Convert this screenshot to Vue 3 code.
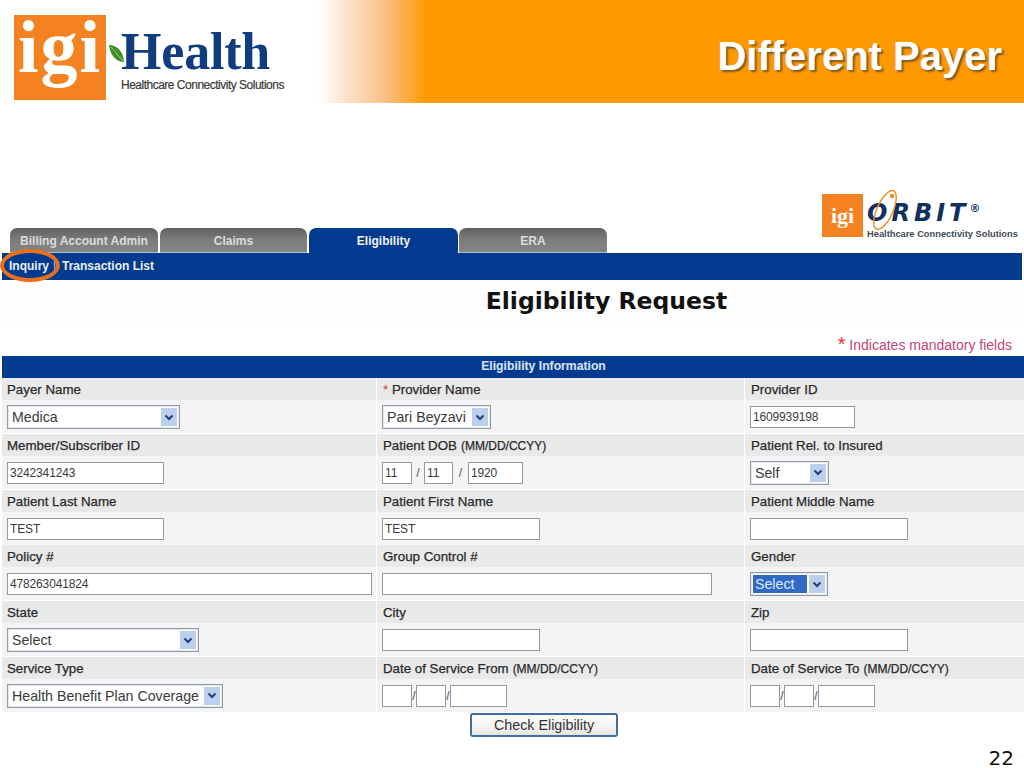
<script setup>
const rows = [
  [
    { label: 'Payer Name', type: 'select', value: 'Medica', width: 173 },
    { label: 'Provider Name', req: true, type: 'select', value: 'Pari Beyzavi', width: 109 },
    { label: 'Provider ID', type: 'input', parts: [{ value: '1609939198', width: 105 }] },
  ],
  [
    { label: 'Member/Subscriber ID', type: 'input', parts: [{ value: '3242341243', width: 157 }] },
    { label: 'Patient DOB', hint: '(MM/DD/CCYY)', type: 'input', parts: [{ value: '11', width: 30 }, { value: '11', width: 29, sep: 12 }, { value: '1920', width: 55, sep: 15 }] },
    { label: 'Patient Rel. to Insured', type: 'select', value: 'Self', width: 79 },
  ],
  [
    { label: 'Patient Last Name', type: 'input', parts: [{ value: 'TEST', width: 157 }] },
    { label: 'Patient First Name', type: 'input', parts: [{ value: 'TEST', width: 158 }] },
    { label: 'Patient Middle Name', type: 'input', parts: [{ value: '', width: 158 }] },
  ],
  [
    { label: 'Policy #', type: 'input', parts: [{ value: '478263041824', width: 365 }] },
    { label: 'Group Control #', type: 'input', parts: [{ value: '', width: 330 }] },
    { label: 'Gender', type: 'select', value: 'Select', width: 78, selected: true },
  ],
  [
    { label: 'State', type: 'select', value: 'Select', width: 192 },
    { label: 'City', type: 'input', parts: [{ value: '', width: 158 }] },
    { label: 'Zip', type: 'input', parts: [{ value: '', width: 158 }] },
  ],
  [
    { label: 'Service Type', type: 'select', value: 'Health Benefit Plan Coverage', width: 216 },
    { label: 'Date of Service From', hint: '(MM/DD/CCYY)', type: 'input', parts: [{ value: '', width: 30 }, { value: '', width: 30, sep: 4 }, { value: '', width: 57, sep: 4 }] },
    { label: 'Date of Service To', hint: '(MM/DD/CCYY)', type: 'input', parts: [{ value: '', width: 30 }, { value: '', width: 30, sep: 4 }, { value: '', width: 57, sep: 4 }] },
  ],
]
const cells = rows.flat()
const tabs = [
  { name: 'Billing Account Admin', width: 148 },
  { name: 'Claims', width: 147 },
  { name: 'Eligibility', width: 149, active: true },
  { name: 'ERA', width: 148 },
]
</script>

<template>
  <div class="page">
    <header class="banner">
      <div class="igi-logo">
        <div class="igi-square">igi</div>
        <svg class="leaf" width="17" height="20" viewBox="0 0 17 20">
          <path d="M1 1 C8 1 15 6 16 18 C8 18 2 11 1 1 Z" fill="#3f8f2c" />
          <path d="M3 3 C7 8 11 12 15 17" stroke="#bfe0a8" stroke-width=".7" fill="none" />
        </svg>
        <div class="igi-words">
          <div class="health">Health</div>
          <div class="strap">Healthcare Connectivity Solutions</div>
        </div>
      </div>
      <div class="slide-title">Different Payer</div>
    </header>

    <div class="tab-row">
      <div class="tabs">
        <div v-for="t in tabs" :key="t.name" class="tab" :class="{ active: t.active }" :style="{ width: t.width + 'px' }">{{ t.name }}</div>
      </div>
      <div class="orbit-logo">
        <div class="orbit-square">igi</div>
        <div class="orbit-words">
          <div class="orbit-name">
            <span>ORBIT</span><span class="reg">®</span>
            <svg class="orbit-ring" width="40" height="46" viewBox="0 0 40 46">
              <ellipse cx="20" cy="23" rx="8" ry="21" transform="rotate(24 20 23)" fill="none" stroke="#ee8a1e" stroke-width="1.4" />
              <circle cx="27" cy="9" r="2.2" fill="#ee8a1e" />
            </svg>
          </div>
          <div class="orbit-strap">Healthcare Connectivity Solutions</div>
        </div>
      </div>
    </div>

    <nav class="subnav">
      <span class="sub-first">Inquiry</span>
      <span class="sub-sep">|</span>
      <span class="sub-second">Transaction List</span>
      <span class="ring"></span>
    </nav>

    <h1 class="request-title">Eligibility Request</h1>
    <div class="mandatory"><span class="star">*</span> Indicates mandatory fields</div>

    <section class="form">
      <div class="form-head">Eligibility Information</div>
      <div class="form-grid">
        <div v-for="c in cells" :key="c.label" class="cell">
          <div class="cell-label"><span v-if="c.req" class="req">* </span>{{ c.label }}<span v-if="c.hint" class="hint">{{ c.hint }}</span></div>
          <div class="cell-field">
            <div v-if="c.type === 'select'" class="select" :style="{ width: c.width + 'px' }">
              <span class="select-text" :class="{ picked: c.selected }">{{ c.value }}</span>
              <span class="select-btn">
                <svg width="10" height="7" viewBox="0 0 10 7"><path d="M1.5 1.5 L5 5 L8.5 1.5" fill="none" stroke="#1f3f78" stroke-width="2" /></svg>
              </span>
            </div>
            <div v-else class="inputs">
              <template v-for="(p, i) in c.parts" :key="i">
                <span v-if="i > 0" class="slash" :style="{ width: p.sep + 'px' }">/</span>
                <input class="text-input" readonly :value="p.value" :style="{ width: p.width + 'px' }" />
              </template>
            </div>
          </div>
        </div>
      </div>
    </section>

    <div class="actions">
      <button class="check" type="button">Check Eligibility</button>
    </div>

    <footer class="page-no">22</footer>
  </div>
</template>

<style>
html, body { margin: 0; background: #fff; }
</style>

<style scoped>
.page {
  width: 1024px;
  height: 768px;
  overflow: hidden;
  background: #fff;
  font-family: "Liberation Sans", Arial, sans-serif;
  color: #222;
  display: flex;
  flex-direction: column;
}

/* banner */
.banner {
  height: 103px;
  flex: none;
  box-sizing: border-box;
  padding: 15px 22px 0 14px;
  display: flex;
  justify-content: space-between;
  background: linear-gradient(90deg, #fff 0, #fff 318px, #fde3cf 345px, #fbbf86 385px, #ff9900 427px, #ff9900 100%);
}
.igi-logo { display: flex; align-items: flex-start; height: 85px; }
.igi-square {
  width: 92px;
  height: 85px;
  background: #f58220;
  color: #fff;
  font: bold 74px/64px "Liberation Serif", serif;
  letter-spacing: 2px;
  text-align: center;
}
.leaf { margin: 29px -4px 0 2px; flex: none; position: relative; z-index: 1; }
.igi-words { display: flex; flex-direction: column; }
.health {
  font: bold 52px/50px "Liberation Serif", serif;
  color: #103c80;
  margin-top: 12px;
  letter-spacing: -.2px;
}
.strap {
  font-size: 12px;
  line-height: 13px;
  margin-top: 2px;
  color: #3a3a3a;
  letter-spacing: -.5px;
  white-space: nowrap;
  -webkit-text-stroke: .2px #3a3a3a;
}
.slide-title {
  font-size: 40px;
  line-height: 44px;
  font-weight: bold;
  color: #fff;
  margin-top: 19px;
  text-shadow: 2px 2px 2px #7a5a28;
}

/* tabs */
.tab-row {
  height: 150px;
  flex: none;
  box-sizing: border-box;
  padding: 85px 6px 0 10px;
  display: flex;
  justify-content: space-between;
  align-items: flex-end;
}
.tabs { display: flex; gap: 2px; }
.tab {
  box-sizing: border-box;
  height: 25px;
  border-radius: 7px 7px 0 0;
  background: linear-gradient(180deg, #5f5f5f 0, #7d7d7d 50%, #858585 100%);
  border-bottom: 1px solid #a9c0c8;
  color: #dcdcdc;
  font-size: 12px;
  font-weight: bold;
  line-height: 26px;
  text-align: center;
}
.tab.active { background: #023a8f; border-bottom: 0; color: #f2f2f2; margin-right: -1px; }
.orbit-logo { display: flex; align-items: flex-start; height: 52px; margin-bottom: 13px; }
.orbit-square {
  width: 41px;
  height: 43px;
  margin-top: 6px;
  background: #f58220;
  color: #fff;
  font: bold 22px/43px "Liberation Serif", serif;
  text-align: center;
}
.orbit-words { margin-left: 4px; width: 151px; }
.orbit-name {
  position: relative;
  font: italic bold 24px/30px "DejaVu Sans", sans-serif;
  margin-top: 6px;
  letter-spacing: 4px;
  color: #10305f;
  white-space: nowrap;
}
.reg { font-size: 11px; vertical-align: 9px; font-style: normal; letter-spacing: 0; }
.orbit-ring { position: absolute; left: -2px; top: -7px; }
.orbit-strap {
  font-size: 9.3px;
  line-height: 10px;
  margin-top: 1px;
  font-weight: bold;
  color: #3f4a55;
  white-space: nowrap;
}

/* sub navigation */
.subnav {
  position: relative;
  flex: none;
  height: 27px;
  margin: 0 2px;
  background: #023a8f;
  color: #eaf0ee;
  font-size: 12px;
  font-weight: bold;
  line-height: 27px;
  padding-left: 7px;
  display: flex;
}
.sub-first { width: 44px; }
.sub-sep { width: 9px; color: #c4d2ea; font-weight: normal; }
.ring {
  position: absolute;
  left: -2px;
  top: -4px;
  width: 60px;
  height: 33px;
  box-sizing: border-box;
  border: 4px solid #e8701a;
  border-radius: 50%;
}

/* title */
.request-title {
  flex: none;
  margin: 0;
  height: 44px;
  box-sizing: border-box;
  background: #fdfdfd;
  text-align: center;
  font: bold 23.5px/43px "DejaVu Sans", sans-serif;
  color: #111;
  text-indent: 189px;
}
.mandatory {
  flex: none;
  height: 32px;
  box-sizing: border-box;
  padding: 11px 12px 0 0;
  text-align: right;
  font-size: 14px;
  line-height: 21px;
  color: #c2457c;
}
.star { color: #e8303a; font-size: 20px; line-height: 14px; vertical-align: -1px; }

/* form */
.form { flex: none; margin-left: 2px; }
.form-head {
  height: 22px;
  box-sizing: border-box;
  padding-left: 61px;
  background: #023a8f;
  color: #d8e2f2;
  font-size: 12.2px;
  font-weight: bold;
  line-height: 21px;
  text-align: center;
  -webkit-text-stroke: .1px #d8e2f2;
}
.form-grid {
  display: grid;
  grid-template-columns: 374px 367px 279px;
  column-gap: 1px;
  grid-auto-rows: 55.75px;
}
.cell { display: flex; flex-direction: column; }
.cell-label {
  flex: none;
  height: 22px;
  box-sizing: border-box;
  padding-left: 5px;
  background: #e9e9e9;
  font-size: 13.3px;
  line-height: 24px;
  color: #2a2a2a;
  white-space: nowrap;
  -webkit-text-stroke: .25px #2a2a2a;
}
.cell:nth-child(3n + 2) .cell-label,
.cell:nth-child(3n) .cell-label { padding-left: 6px; }
.hint { font-size: 12px; margin-left: 4px; }
.req { color: #d8303a; -webkit-text-stroke: 0; }
.cell-field {
  flex: none;
  height: 33px;
  box-sizing: border-box;
  padding: 1px 0 0 5px;
  background: #f4f4f4;
  display: flex;
  align-items: center;
}
.select {
  box-sizing: border-box;
  height: 24px;
  background: #fff;
  border: 1px solid #8e9aa6;
  box-shadow: inset 0 0 0 1px #e4e8ec;
  display: flex;
  align-items: center;
  justify-content: space-between;
  padding: 2px;
  font-size: 14.2px;
  color: #3a3a3a;
  white-space: nowrap;
}
.select-text { padding: 0 2px; line-height: 18px; }
.select-text.picked { background: #316ac5; color: #dfe9fa; flex: 1; }
.select-btn {
  flex: none;
  width: 16px;
  height: 18px;
  margin-left: 2px;
  background: #bcd0ee;
  display: flex;
  align-items: center;
  justify-content: center;
}
.inputs { display: flex; align-items: center; }
.slash { font-size: 12px; color: #555; text-align: center; flex: none; }
.text-input {
  box-sizing: border-box;
  height: 22px;
  margin: 0;
  padding: 0 2px;
  border: 1px solid #8e9aa6;
  border-radius: 0;
  background: #fff;
  outline: 0;
  font-family: "Liberation Sans", Arial, sans-serif;
  font-size: 12px;
  letter-spacing: -.15px;
  color: #3a3a3a;
  flex: none;
}

/* actions */
.actions { flex: none; padding: 0 0 0 470px; }
.check {
  display: block;
  box-sizing: border-box;
  width: 148px;
  height: 24px;
  padding: 0;
  border: 2px solid #3f6f9f;
  border-radius: 3px;
  background: linear-gradient(180deg, #fff 0, #f3f3f3 60%, #e6e4dc 100%);
  font-family: "Liberation Sans", Arial, sans-serif;
  font-size: 14.3px;
  color: #333;
}
.page-no {
  flex: none;
  margin-top: 11px;
  padding-right: 10px;
  text-align: right;
  font: 20px/20px "DejaVu Sans", sans-serif;
  color: #111;
}
</style>
